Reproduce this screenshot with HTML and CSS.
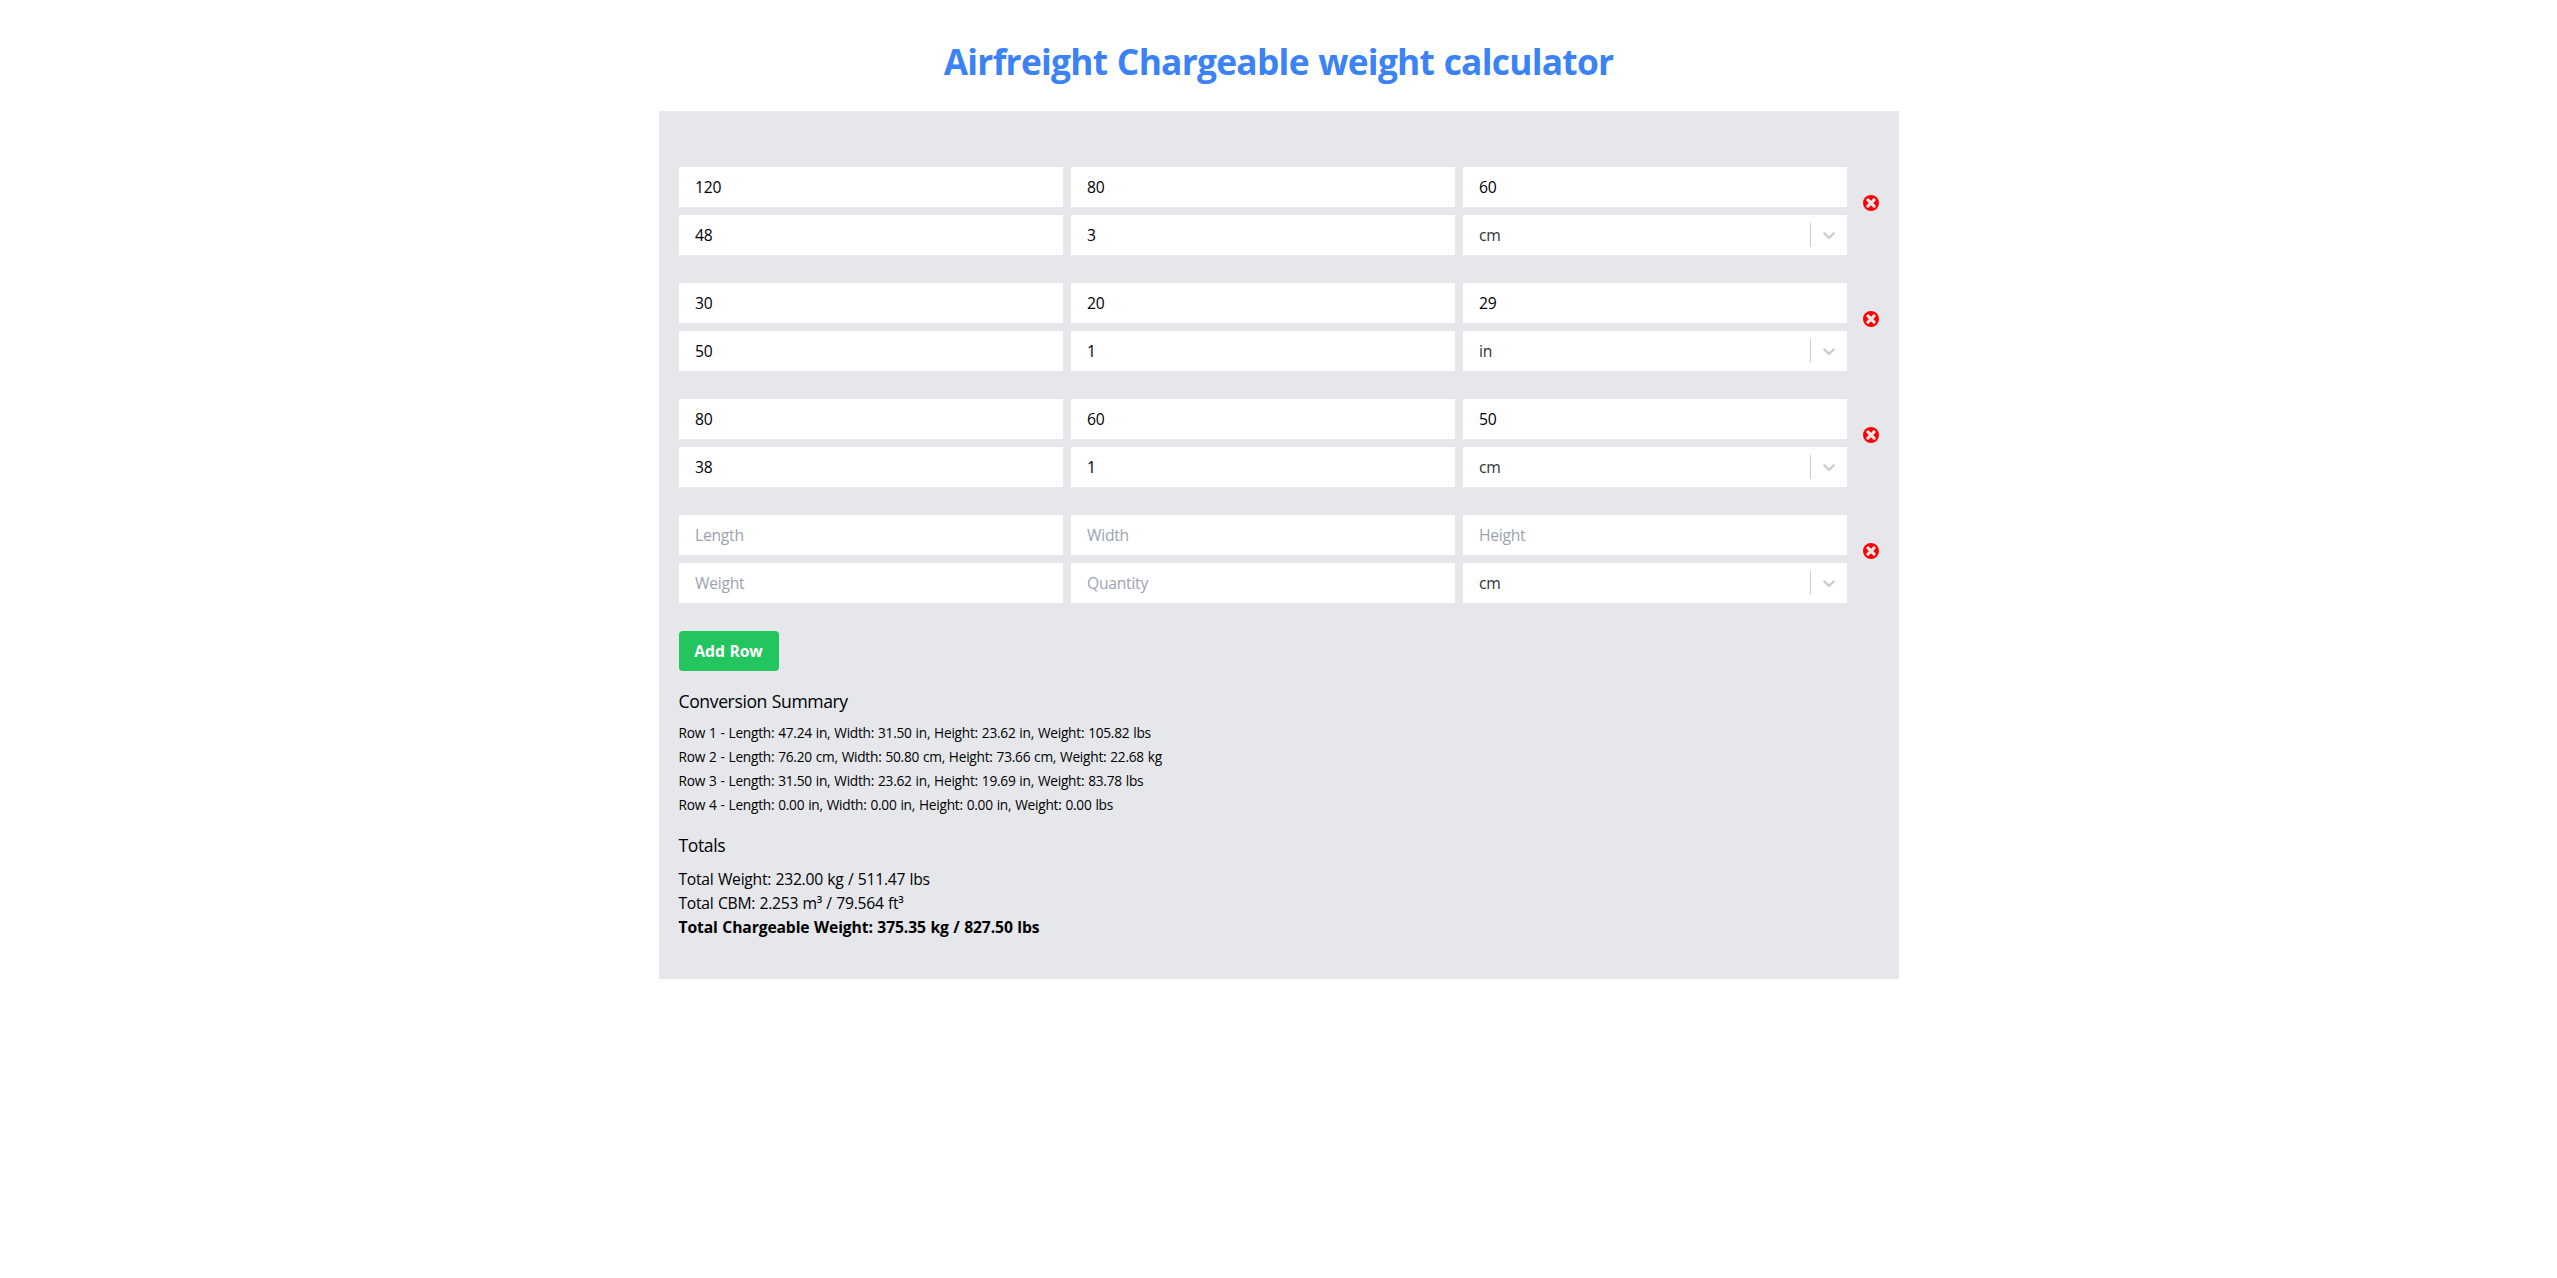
FILE: index.html
```
<!DOCTYPE html>
<html lang="en">
<head>
<meta charset="utf-8">
<title>Airfreight Chargeable weight calculator</title>
<link rel="stylesheet" href="styles.css">
</head>
<body>
<svg class="sprite" aria-hidden="true">
  <symbol id="remove" viewBox="0 0 16 16"><circle cx="8" cy="8" r="8"/><path d="M4.9 4.9l6.2 6.2M11.1 4.9l-6.2 6.2" stroke="#e5e7eb" stroke-width="3.2" stroke-linecap="round"/></symbol>
  <symbol id="chevron" viewBox="0 0 20 20"><path d="M4.516 7.548c0.436-0.446 1.043-0.481 1.576 0l3.908 3.747 3.908-3.747c0.533-0.481 1.141-0.446 1.574 0 0.436 0.445 0.408 1.197 0 1.615-0.406 0.418-4.695 4.502-4.695 4.502-0.217 0.223-0.502 0.335-0.787 0.335s-0.57-0.112-0.789-0.335c0 0-4.287-4.084-4.695-4.502s-0.436-1.17 0-1.615z"/></symbol>
</svg>
<main class="page">
  <h1 class="title">Airfreight Chargeable weight calculator</h1>
  <section class="panel">
    <div class="row">
      <div class="fields">
        <input class="field" placeholder="Length" value="120">
        <input class="field" placeholder="Width" value="80">
        <input class="field" placeholder="Height" value="60">
        <input class="field" placeholder="Weight" value="48">
        <input class="field" placeholder="Quantity" value="3">
        <div class="select"><span class="unit">cm</span><span class="indicator"><svg class="chevron"><use href="#chevron"/></svg></span></div>
      </div>
      <button class="remove" aria-label="Remove row"><svg class="remove-icon"><use href="#remove"/></svg></button>
    </div>
    <div class="row">
      <div class="fields">
        <input class="field" placeholder="Length" value="30">
        <input class="field" placeholder="Width" value="20">
        <input class="field" placeholder="Height" value="29">
        <input class="field" placeholder="Weight" value="50">
        <input class="field" placeholder="Quantity" value="1">
        <div class="select"><span class="unit">in</span><span class="indicator"><svg class="chevron"><use href="#chevron"/></svg></span></div>
      </div>
      <button class="remove" aria-label="Remove row"><svg class="remove-icon"><use href="#remove"/></svg></button>
    </div>
    <div class="row">
      <div class="fields">
        <input class="field" placeholder="Length" value="80">
        <input class="field" placeholder="Width" value="60">
        <input class="field" placeholder="Height" value="50">
        <input class="field" placeholder="Weight" value="38">
        <input class="field" placeholder="Quantity" value="1">
        <div class="select"><span class="unit">cm</span><span class="indicator"><svg class="chevron"><use href="#chevron"/></svg></span></div>
      </div>
      <button class="remove" aria-label="Remove row"><svg class="remove-icon"><use href="#remove"/></svg></button>
    </div>
    <div class="row">
      <div class="fields">
        <input class="field" placeholder="Length">
        <input class="field" placeholder="Width">
        <input class="field" placeholder="Height">
        <input class="field" placeholder="Weight">
        <input class="field" placeholder="Quantity">
        <div class="select"><span class="unit">cm</span><span class="indicator"><svg class="chevron"><use href="#chevron"/></svg></span></div>
      </div>
      <button class="remove" aria-label="Remove row"><svg class="remove-icon"><use href="#remove"/></svg></button>
    </div>
    <button class="add">Add Row</button>
    <h2 class="heading">Conversion Summary</h2>
    <ul class="summary">
      <li>Row 1 - Length: 47.24 in, Width: 31.50 in, Height: 23.62 in, Weight: 105.82 lbs</li>
      <li>Row 2 - Length: 76.20 cm, Width: 50.80 cm, Height: 73.66 cm, Weight: 22.68 kg</li>
      <li>Row 3 - Length: 31.50 in, Width: 23.62 in, Height: 19.69 in, Weight: 83.78 lbs</li>
      <li>Row 4 - Length: 0.00 in, Width: 0.00 in, Height: 0.00 in, Weight: 0.00 lbs</li>
    </ul>
    <h2 class="heading">Totals</h2>
    <div class="totals">
      <p>Total Weight: 232.00 kg / 511.47 lbs</p>
      <p>Total CBM: 2.253 m³ / 79.564 ft³</p>
      <p class="chargeable">Total Chargeable Weight: 375.35 kg / 827.50 lbs</p>
    </div>
  </section>
</main>
</body>
</html>
```
FILE: styles.css
```
* { box-sizing: border-box; margin: 0; padding: 0; }

body {
  background: #fff;
  color: #000;
  font-family: "Segoe UI", "Open Sans", "Noto Sans", sans-serif;
  font-size: 15.7px;
  line-height: 24px;
  letter-spacing: -0.27px;
  word-spacing: 0.6px;
}

button, input { border: 0; font: inherit; color: inherit; letter-spacing: inherit; word-spacing: inherit; }

.sprite { display: none; }

.page {
  width: 1240px;
  margin: 0 auto;
  padding-top: 41px;
}

.title {
  margin-bottom: 30px;
  color: #3b82f6;
  font-size: 35.3px;
  font-weight: 700;
  line-height: 40px;
  letter-spacing: -0.72px;
  word-spacing: 1px;
  text-align: center;
}

.panel {
  height: 868px;
  padding: 56px 20px 0;
  background: #e5e7eb;
}

.row {
  display: flex;
  align-items: center;
  gap: 16px;
  margin-bottom: 28px;
}

.fields {
  display: grid;
  grid-template-columns: repeat(3, 384px);
  gap: 8px;
}

.field, .select {
  width: 100%;
  height: 40px;
  padding: 8px 16px 8px 16.5px;
  background: #fff;
}

.field::placeholder { color: #9ca3af; opacity: 1; }

.select {
  display: flex;
  align-items: center;
  justify-content: space-between;
  padding-right: 0;
}

.unit { color: #333; }

.indicator {
  display: flex;
  padding: 2px 8px;
  border-left: 1px solid #ccc;
}

.chevron { width: 20px; height: 20px; fill: #ccc; }

.remove { display: flex; background: none; margin-top: -16px; }

.remove-icon { width: 16px; height: 16px; fill: #f00; }

.add {
  display: block;
  width: 100px;
  height: 40px;
  margin-bottom: 16px;
  border-radius: 4px;
  background: #22c55e;
  color: #fff;
  font-weight: 700;
  letter-spacing: -0.08px;
}

.heading {
  margin-bottom: 6px;
  font-size: 17.6px;
  font-weight: 400;
  line-height: 28px;
  letter-spacing: -0.4px;
}

.summary {
  margin-bottom: 14px;
  font-size: 13.7px;
  letter-spacing: -0.25px;
  list-style: none;
}

.totals { padding-top: 2px; }

.chargeable { font-weight: 700; letter-spacing: -0.13px; }
```
